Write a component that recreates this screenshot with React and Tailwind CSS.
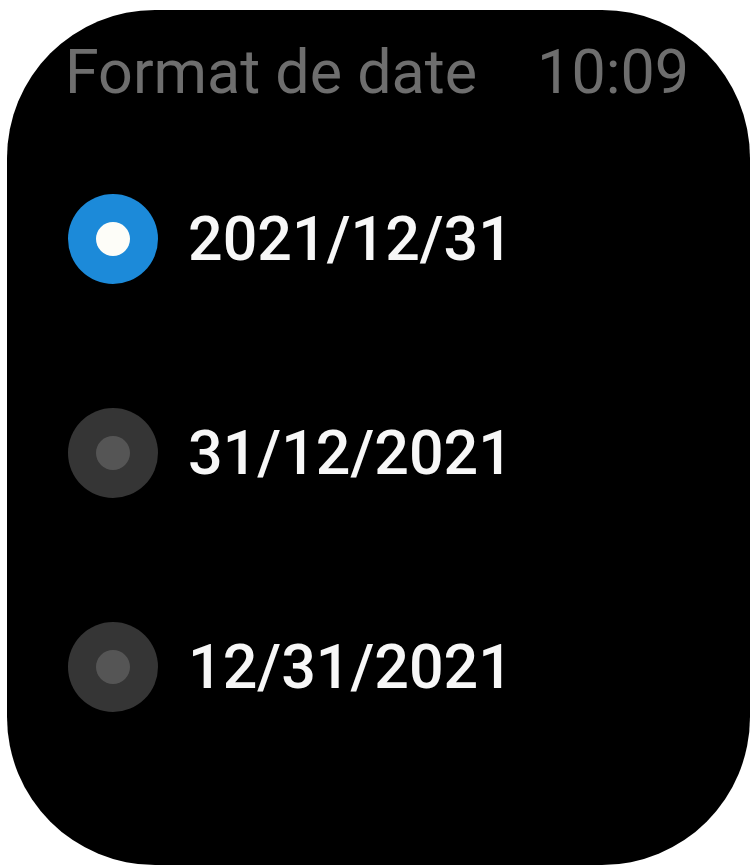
const OPTIONS = [
  { label: "2021/12/31", selected: true },
  { label: "31/12/2021", selected: false },
  { label: "12/31/2021", selected: false },
];

function Radio({ selected }) {
  return (
    <div
      className={`w-[90px] h-[90px] rounded-full flex items-center justify-center flex-shrink-0 ${
        selected ? "bg-[#1c8ad9]" : "bg-[#353535]"
      }`}
    >
      <div className={`w-[34px] h-[34px] rounded-full ${selected ? "bg-[#fdfdf8]" : "bg-[#555555]"}`} />
    </div>
  );
}

export default function App() {
  return (
    <div className="w-[756px] h-[868px] bg-white pt-[10px] pl-[7px]" style={{ fontFamily: "Roboto, 'Noto Sans', sans-serif" }}>
      <div className="w-[743px] h-[855px] bg-black rounded-[148px] overflow-hidden">
        {/* Header */}
        <div className="flex justify-between items-start pt-[32px] pl-[58px] pr-[61px] text-[61px] leading-[60px] text-[#6e6e6e]">
          <span>Format de date</span>
          <span>10:09</span>
        </div>

        {/* Options */}
        <div className="flex flex-col gap-[124px] mt-[92px] pl-[61px]">
          {OPTIONS.map((opt) => (
            <div key={opt.label} className="flex items-center gap-[30px] h-[90px]">
              <Radio selected={opt.selected} />
              <span className="text-[61px] leading-[60px] font-medium text-[#f7f7f7]">{opt.label}</span>
            </div>
          ))}
        </div>
      </div>
    </div>
  );
}
